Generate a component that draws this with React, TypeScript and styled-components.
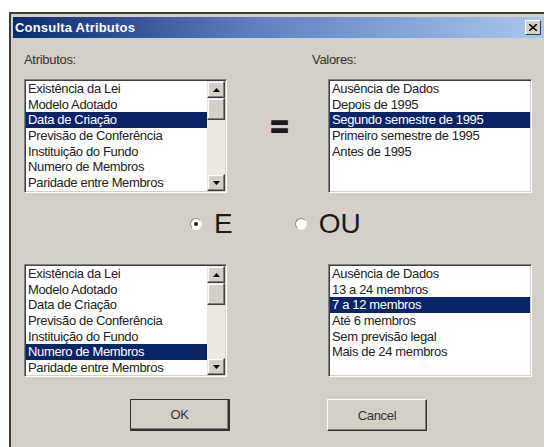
import styled, { createGlobalStyle } from "styled-components";
import { FC } from "react";

const GlobalStyle = createGlobalStyle`
	html, body {
		margin: 0;
		padding: 0;
		background: #ffffff;
		overflow: hidden;
	}
	body {
		font-family: "Liberation Sans", Arial, sans-serif;
	}
`;

const atributos = [
	"Existência da Lei",
	"Modelo Adotado",
	"Data de Criação",
	"Previsão de Conferência",
	"Instituição do Fundo",
	"Numero de Membros",
	"Paridade entre Membros",
];

const valoresData = [
	"Ausência de Dados",
	"Depois de 1995",
	"Segundo semestre de 1995",
	"Primeiro semestre de 1995",
	"Antes de 1995",
];

const valoresMembros = [
	"Ausência de Dados",
	"13 a 24 membros",
	"7 a 12 membros",
	"Até 6 membros",
	"Sem previsão legal",
	"Mais de 24 membros",
];

type ListProps = {
	items: string[];
	selected: number;
	scroll?: boolean;
};

const ListBox: FC<ListProps> = ({ items, selected, scroll }) => (
	<Sunken>
		<Items>
			{items.map((item, i) => (
				<Item key={item} $active={i === selected}>
					{item}
				</Item>
			))}
		</Items>
		{scroll && (
			<ScrollBar>
				<Arrow>
					<ArrowGlyph viewBox='0 0 7 4'>
						<path d='M3.5 0 L7 4 L0 4 Z' />
					</ArrowGlyph>
				</Arrow>
				<Thumb />
				<Track />
				<Arrow>
					<ArrowGlyph viewBox='0 0 7 4'>
						<path d='M0 0 L7 0 L3.5 4 Z' />
					</ArrowGlyph>
				</Arrow>
			</ScrollBar>
		)}
	</Sunken>
);

const App: FC = () => {
	return (
		<>
			<GlobalStyle />
			<Window>
				<TitleBar>
					<Title>Consulta Atributos</Title>
					<CloseButton>
						<svg width='8' height='7' viewBox='0 0 8 7'>
							<path d='M0 0 L8 7 M8 0 L0 7' stroke='#000' strokeWidth='1.6' />
						</svg>
					</CloseButton>
				</TitleBar>

				<Body>
					<Label>Atributos:</Label>
					<span />
					<Label $shift={-16}>Valores:</Label>

					<ListBox items={atributos} selected={2} scroll />
					<Equals>=</Equals>
					<ListBox items={valoresData} selected={2} />

					<RadioRow>
						<RadioOption>
							<RadioCircle $checked />
							<RadioLabel>E</RadioLabel>
						</RadioOption>
						<RadioOption>
							<RadioCircle />
							<RadioLabel>OU</RadioLabel>
						</RadioOption>
					</RadioRow>

					<ListBox items={atributos} selected={5} scroll />
					<span />
					<ListBox items={valoresMembros} selected={2} />

					<ButtonRow>
						<Button $default>OK</Button>
						<Button>Cancel</Button>
					</ButtonRow>
				</Body>
			</Window>
		</>
	);
};

export default App;

const Window = styled.div`
	margin: 12px 0 0 9px;
	height: 435px;
	box-sizing: border-box;
	background: #d4d0c8;
	border-top: 2px solid #3c3c3c;
	border-left: 2px solid #3c3c3c;
	padding: 3px 0 0 2px;
`;

const TitleBar = styled.div`
	height: 21px;
	display: flex;
	align-items: center;
	justify-content: space-between;
	padding: 0 3px 0 2px;
	background: linear-gradient(to right, #0c2a70, #5d7fbf 45%, #a8c8ee);
`;

const Title = styled.span`
	color: #ffffff;
	font-weight: 700;
	font-size: 13px;
	letter-spacing: 0.2px;
`;

const CloseButton = styled.div`
	width: 16px;
	height: 15px;
	box-sizing: border-box;
	display: flex;
	align-items: center;
	justify-content: center;
	background: #d4d0c8;
	border-top: 1px solid #ffffff;
	border-left: 1px solid #ffffff;
	border-right: 1px solid #404040;
	border-bottom: 1px solid #404040;
`;

const Body = styled.div`
	display: grid;
	grid-template-columns: 203px 101px 204px;
	grid-template-rows: 27px 114px 71px 113px 22px 32px;
	padding: 14px 0 0 11px;
	color: #000;
	font-size: 13px;
`;

const Label = styled.span<{ $shift?: number }>`
	line-height: 15px;
	color: #333;
	letter-spacing: -0.3px;
	margin-left: ${(p) => p.$shift ?? 0}px;
`;

const Sunken = styled.div`
	display: flex;
	box-sizing: border-box;
	background: #ffffff;
	border-top: 1px solid #808080;
	border-left: 1px solid #808080;
	border-right: 1px solid #ffffff;
	border-bottom: 1px solid #ffffff;
	box-shadow: inset 1px 1px 0 #404040, inset -1px -1px 0 #d4d0c8;
	padding: 1px;
	overflow: hidden;
`;

const Items = styled.ul`
	flex: 1;
	margin: 0;
	padding: 0;
	list-style: none;
`;

const Item = styled.li<{ $active?: boolean }>`
	height: 15.7px;
	line-height: 15.7px;
	padding-left: 2px;
	white-space: nowrap;
	letter-spacing: -0.35px;
	color: ${(p) => (p.$active ? "#ffffff" : "#222")};
	background: ${(p) => (p.$active ? "#0a246a" : "transparent")};
`;

const ScrollBar = styled.div`
	width: 18px;
	display: flex;
	flex-direction: column;
	background: #ece9e2;
`;

const raised = `
	box-sizing: border-box;
	background: #d4d0c8;
	border-top: 1px solid #e8e6e0;
	border-left: 1px solid #e8e6e0;
	border-right: 1px solid #404040;
	border-bottom: 1px solid #404040;
	box-shadow: inset -1px -1px 0 #808080, inset 1px 1px 0 #ffffff;
`;

const Arrow = styled.div`
	${raised}
	height: 17px;
	display: flex;
	align-items: center;
	justify-content: center;
`;

const ArrowGlyph = styled.svg`
	width: 7px;
	height: 4px;
	fill: #000;
`;

const Thumb = styled.div`
	${raised}
	height: 22px;
`;

const Track = styled.div`
	flex: 1;
`;

const Equals = styled.div`
	display: flex;
	justify-content: center;
	padding: 33px 0 0 4px;
	font-size: 30px;
	font-weight: 700;
	line-height: 30px;
	color: #1a1a1a;
	-webkit-text-stroke: 1.6px #1a1a1a;
`;

const RadioRow = styled.div`
	grid-column: 1 / -1;
	display: flex;
	align-items: center;
	gap: 62px;
	padding: 0 0 10px 166px;
`;

const RadioOption = styled.label`
	display: flex;
	align-items: center;
	gap: 12px;
`;

const RadioCircle = styled.span<{ $checked?: boolean }>`
	width: 12px;
	height: 12px;
	box-sizing: border-box;
	border-radius: 50%;
	background: #ffffff;
	border: 1px solid #8c8a84;
	border-right-color: #f4f3ef;
	border-bottom-color: #f4f3ef;
	display: flex;
	align-items: center;
	justify-content: center;

	&::after {
		content: "";
		width: 4px;
		height: 4px;
		border-radius: 50%;
		background: ${(p) => (p.$checked ? "#222" : "transparent")};
	}
`;

const RadioLabel = styled.span`
	font-size: 28px;
	line-height: 30px;
	color: #1a1a1a;
`;

const ButtonRow = styled.div`
	grid-row: 6;
	grid-column: 1 / -1;
	display: flex;
	gap: 97px;
	padding-left: 106px;
`;

const Button = styled.button<{ $default?: boolean }>`
	width: 100px;
	height: 32px;
	box-sizing: border-box;
	background: #d4d0c8;
	font-family: "Liberation Sans", Arial, sans-serif;
	font-size: 13px;
	letter-spacing: -0.3px;
	color: #333;
	padding: 0;
	border-top: 1px solid ${(p) => (p.$default ? "#303030" : "#ffffff")};
	border-left: 1px solid ${(p) => (p.$default ? "#303030" : "#ffffff")};
	border-right: ${(p) => (p.$default ? "2px" : "1px")} solid #303030;
	border-bottom: ${(p) => (p.$default ? "2px" : "1px")} solid #303030;
	box-shadow: inset -1px -1px 0 #808080;
`;
